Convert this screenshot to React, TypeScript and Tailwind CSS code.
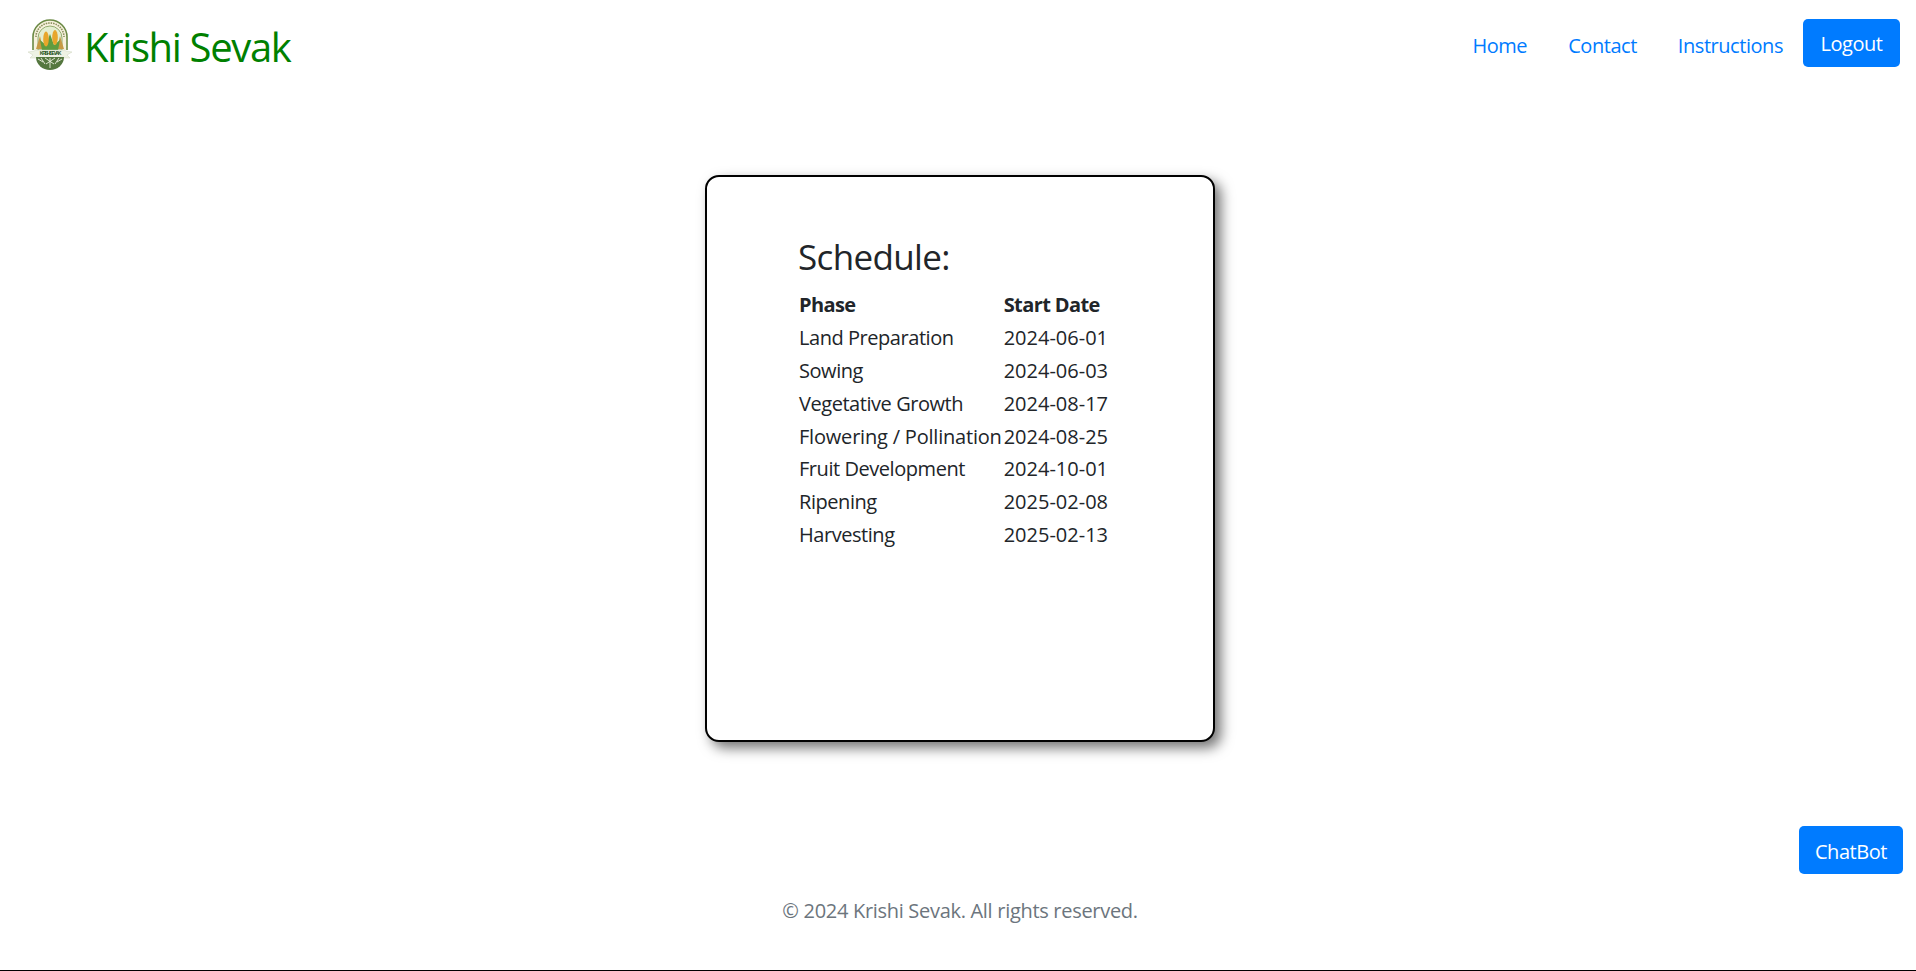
const rows = [
  { phase: "Land Preparation", date: "2024-06-01", cls: "" },
  { phase: "Sowing", date: "2024-06-03", cls: "" },
  { phase: "Vegetative Growth", date: "2024-08-17", cls: "" },
  { phase: "Flowering / Pollination", date: "2024-08-25", cls: "tracking-[-0.2px]" },
  { phase: "Fruit Development", date: "2024-10-01", cls: "" },
  { phase: "Ripening", date: "2025-02-08", cls: "" },
  { phase: "Harvesting", date: "2025-02-13", cls: "" },
];

function Logo() {
  return (
    <svg width="44" height="53" viewBox="0 0 44 53" className="shrink-0 self-start">
      {/* arch */}
      <path d="M5 33V20a17 17 0 0 1 34 0v13" fill="#f6f1dc" stroke="#6b8a45" strokeWidth="1.6" />
      <path d="M8 20a14 14 0 0 1 28 0" fill="none" stroke="#8a8f5c" strokeWidth="1.6" strokeDasharray="1.5 1" />
      <path d="M10 33V21a12 12 0 0 1 24 0v12z" fill="#e3eed0" stroke="#7d9a55" strokeWidth="0.8" />
      {/* wheat and leaves */}
      <path d="M8 32l4-13 3 13zM36 32l-4-13-3 13z" fill="#c79a45" />
      <path d="M14 33l-2-10 6 5 4-11 4 11 6-5-2 10z" fill="#5f9c3f" />
      {/* corn */}
      <ellipse cx="18" cy="22" rx="2.8" ry="7.5" fill="#e8a62a" />
      <ellipse cx="27" cy="20.5" rx="2.8" ry="7.5" fill="#e8a62a" />
      {/* banner */}
      <path d="M0 35l6-1 2-1h28l2 1 6 1-5 3 3 3H2l3-3z" fill="#eef2e4" stroke="#c4ccb4" strokeWidth="0.4" />
      <text x="22" y="38.4" textAnchor="middle" fontSize="5.2" fontWeight="700" fill="#2f5a2a" fontFamily="Liberation Sans">
        KRISHI SEVAK
      </text>
      {/* roots */}
      <path d="M8 40h28a14 13 0 0 1-28 0z" fill="#55773f" />
      <path d="M13 41l4 6M22 41v10M31 41l-4 6M17 41l9 6M27 41l-9 6M10 42l5 3M34 42l-5 3" stroke="#eef2e2" strokeWidth="0.9" />
    </svg>
  );
}

export default function App() {
  return (
    <div className="relative flex h-[971px] flex-col overflow-hidden border-b border-black bg-white font-['Open_Sans',sans-serif] text-[20px] tracking-[-0.45px] text-[#212529]">
      <nav className="flex h-[87px] items-start justify-between pl-[28px] pr-[16px]">
        <a className="mt-[17px] flex items-center gap-[12px] text-[40px] leading-[60px] tracking-[-1.35px] text-[#008000]">
          <Logo />
          <span>Krishi Sevak</span>
        </a>
        <div className="mt-[19px] flex items-start">
          <a className="mt-[12px] mr-[41px] leading-[30px] text-[#007bff]">Home</a>
          <a className="mt-[12px] mr-[41px] leading-[30px] text-[#007bff]">Contact</a>
          <a className="mt-[12px] mr-[20px] leading-[30px] text-[#007bff]">Instructions</a>
          <button className="h-[48px] w-[97px] rounded-[5px] bg-[#007bff] pt-[2px] text-white">Logout</button>
        </div>
      </nav>

      <main className="mt-[88px] flex justify-center pl-[4px]">
        <div className="h-[567px] w-[510px] rounded-[14px] border-2 border-black bg-white pt-[59px] pl-[91px] shadow-[6px_6px_13px_rgba(0,0,0,0.55)]">
          <h2 className="mb-[11px] text-[35px] leading-[42px] tracking-[-0.65px] text-[#212529]">Schedule:</h2>
          <table className="border-collapse leading-[30px]">
            <thead>
              <tr>
                <th className="w-[203px] px-[1px] py-[1.4px] text-left font-bold tracking-[-0.6px]">Phase</th>
                <th className="px-[1px] py-[1.4px] text-left font-bold tracking-[-0.6px]">Start Date</th>
              </tr>
            </thead>
            <tbody>
              {rows.map((row) => (
                <tr key={row.phase}>
                  <td className={`whitespace-nowrap px-[1px] py-[1.4px] ${row.cls}`}>{row.phase}</td>
                  <td className="px-[1px] py-[1.4px] tracking-normal">{row.date}</td>
                </tr>
              ))}
            </tbody>
          </table>
        </div>
      </main>

      <footer className="mt-[154px] pl-[4px] text-center leading-[30px] tracking-[-0.3px] text-[#6c757d]">
        © 2024 Krishi Sevak. All rights reserved.
      </footer>

      <button className="absolute right-[13px] top-[826px] h-[48px] w-[104px] rounded-[5px] bg-[#007bff] pt-[3px] text-white">
        ChatBot
      </button>
    </div>
  );
}
